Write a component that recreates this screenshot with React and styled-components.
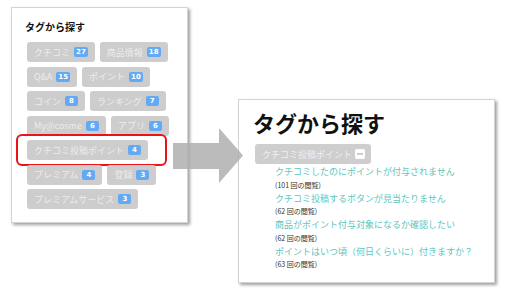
import React from 'react'
import styled, { createGlobalStyle } from 'styled-components'

const GlobalStyle = createGlobalStyle`
  html, body {
    margin: 0;
    padding: 0;
    background: #fff;
  }
  body {
    font-family: "Noto Sans CJK JP", "Noto Sans", sans-serif;
  }
`;

const tagRows = [
  [{ name: "クチコミ", count: 27 }, { name: "商品情報", count: 18 }],
  [{ name: "Q&A", count: 15 }, { name: "ポイント", count: 10 }],
  [{ name: "コイン", count: 8 }, { name: "ランキング", count: 7 }],
  [{ name: "My@cosme", count: 6 }, { name: "アプリ", count: 6 }],
  [{ name: "クチコミ投稿ポイント", count: 4, marked: true }],
  [{ name: "プレミアム", count: 4 }, { name: "登録", count: 3 }],
  [{ name: "プレミアムサービス", count: 3 }],
];

const questions = [
  { title: "クチコミしたのにポイントが付与されません", views: 101 },
  { title: "クチコミ投稿するボタンが見当たりません", views: 62 },
  { title: "商品がポイント付与対象になるか確認したい", views: 62 },
  { title: "ポイントはいつ頃（何日くらいに）付きますか？", views: 63 },
];

export default function App() {
  return (
    <Page>
      <GlobalStyle />
      <LeftPanel>
        <SmallTitle>タグから探す</SmallTitle>
        <TagRows>
          {tagRows.map((row, i) => (
            <TagRow key={i}>
              {row.map((tag) => (
                <Tag key={tag.name}>
                  {tag.name}
                  <Badge>{tag.count}</Badge>
                  {tag.marked && <Highlight />}
                </Tag>
              ))}
            </TagRow>
          ))}
        </TagRows>
      </LeftPanel>

      <Arrow viewBox="0 0 70 55" width="70" height="55">
        <polygon points="0,15 46,15 46,0 70,27.5 46,55 46,41 0,41" fill="#b0b0b0" />
      </Arrow>

      <RightPanel>
        <BigTitle>タグから探す</BigTitle>
        <OpenTag>
          クチコミ投稿ポイント
          <MinusIcon viewBox="0 0 10 10" width="10" height="10">
            <rect x="0" y="0" width="10" height="10" rx="2" fill="#fff" />
            <rect x="2" y="4.2" width="6" height="1.6" fill="#c4c4c4" />
          </MinusIcon>
        </OpenTag>
        <QuestionList>
          {questions.map((q) => (
            <li key={q.title}>
              <QuestionLink>{q.title}</QuestionLink>
              <Views>({q.views} 回の閲覧)</Views>
            </li>
          ))}
        </QuestionList>
      </RightPanel>
    </Page>
  )
}

const Page = styled.div`
  position: relative;
  width: 507px;
  height: 296px;
  box-sizing: border-box;
  padding: 7px 0 0 11px;
  display: flex;
  align-items: flex-start;
  background: #fff;
`;

const Panel = styled.div`
  box-sizing: border-box;
  background: #fff;
  border: 1px solid #d4d4d4;
  box-shadow: 2px 2px 3px rgba(0, 0, 0, 0.38);
`;

const LeftPanel = styled(Panel)`
  width: 177px;
  height: 216px;
  padding: 12px 0 0 13px;
`;

const SmallTitle = styled.h3`
  margin: 0 0 9px;
  font-size: 10px;
  line-height: 13px;
  font-weight: 700;
  color: #111;
`;

const TagRows = styled.div`
  display: flex;
  flex-direction: column;
  gap: 4.5px;
  margin-left: 2px;
`;

const TagRow = styled.div`
  display: flex;
  gap: 5px;
`;

const Tag = styled.span`
  position: relative;
  display: inline-flex;
  align-items: center;
  gap: 4px;
  height: 20px;
  padding: 0 7px 0 7px;
  border-radius: 3px;
  background: #cdcdcd;
  color: #ececec;
  font-size: 9px;
  white-space: nowrap;
`;

const Badge = styled.span`
  display: inline-block;
  min-width: 9px;
  height: 10px;
  padding: 0 2px;
  border-radius: 2px;
  background: #62aaf3;
  color: #fff;
  font-family: "DejaVu Sans", sans-serif;
  font-size: 7px;
  font-weight: 700;
  line-height: 10px;
  text-align: center;
`;

const Highlight = styled.span`
  position: absolute;
  top: -6px;
  bottom: -6px;
  left: -11px;
  right: -19px;
  border: 2.5px solid #e8141a;
  border-radius: 6px;
  pointer-events: none;
`;

const Arrow = styled.svg`
  position: absolute;
  left: 173px;
  top: 128px;
  z-index: 2;
  opacity: 0.85;
`;

const RightPanel = styled(Panel)`
  width: 257px;
  height: 184px;
  margin: 92px 0 0 50px;
  padding: 9px 0 0 14px;
`;

const BigTitle = styled.h2`
  margin: 0 0 8px;
  font-size: 22px;
  line-height: 27px;
  font-weight: 700;
  color: #111;
`;

const OpenTag = styled.div`
  display: flex;
  width: fit-content;
  align-items: center;
  gap: 3px;
  height: 20px;
  margin-left: 2px;
  padding: 0 6px 0 7px;
  border-radius: 3px;
  background: #cecece;
  color: #f0f0f0;
  font-size: 9px;
  white-space: nowrap;
`;

const MinusIcon = styled.svg`
  display: block;
`;

const QuestionList = styled.ul`
  list-style: none;
  margin: 1px 0 0 22px;
  padding: 0;
`;

const QuestionLink = styled.a`
  display: block;
  color: #5ec6c0;
  font-size: 9px;
  line-height: 13.5px;
  white-space: nowrap;
`;

const Views = styled.span`
  display: block;
  color: #333;
  font-size: 7px;
  line-height: 13px;
`;
